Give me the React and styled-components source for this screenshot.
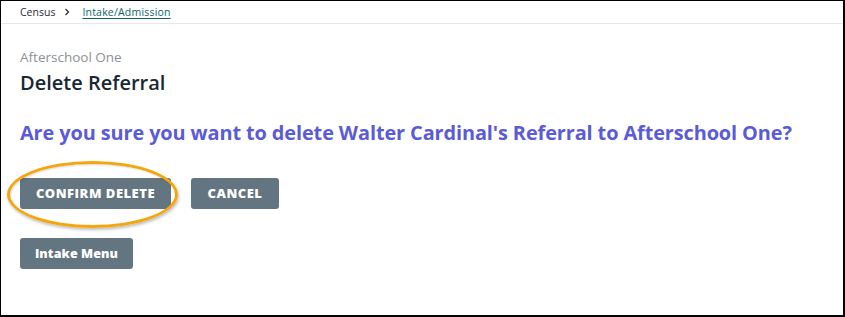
import React from "react";
import styled, { createGlobalStyle } from "styled-components";

const Global = createGlobalStyle`
  html, body { margin: 0; padding: 0; background: #fff; }
  body { font-family: "Open Sans", "Liberation Sans", sans-serif; }
  * { box-sizing: border-box; }
`;

const Frame = styled.div`
  width: 845px;
  height: 317px;
  border-left: 1px solid #000;
  border-top: 1px solid #000;
  border-right: 2px solid #000;
  border-bottom: 2px solid #000;
  background: #fff;
  overflow: hidden;
`;

const Breadcrumbs = styled.nav`
  height: 23px;
  display: flex;
  align-items: center;
  gap: 8px;
  padding: 0 0 1px 19px;
  border-bottom: 1px solid #e8e8e8;
  font-size: 10.5px;
  color: #1f2d36;
`;

const Crumb = styled.span`
  color: #1f2d36;
`;

const CrumbLink = styled.a`
  color: #11646c;
  text-decoration: underline;
  text-underline-offset: 2px;
  margin-left: 3px;
  letter-spacing: 0.2px;
`;

const Chevron = styled.svg`
  width: 8px;
  height: 8px;
`;

const Content = styled.main`
  padding: 25px 19px 0;
  display: flex;
  flex-direction: column;
`;

const Subtitle = styled.div`
  font-size: 13.5px;
  color: #8b9196;
  line-height: 16px;
`;

const Title = styled.h1`
  margin: 6px 0 0;
  font-size: 20px;
  font-weight: 600;
  color: #182733;
  line-height: 24px;
`;

const Question = styled.h2`
  margin: 26px 0 0;
  font-size: 19.9px;
  font-weight: 700;
  color: #5b5bd6;
  line-height: 24px;
  letter-spacing: -0.1px;
`;

const ButtonRow = styled.div`
  display: flex;
  gap: 20px;
  margin-top: 33px;
`;

const Highlight = styled.div`
  position: relative;
  display: inline-flex;
`;

const Ring = styled.span`
  position: absolute;
  left: -13px;
  top: -17px;
  width: 171px;
  height: 67px;
  border: 3px solid #f3a60d;
  border-radius: 50%;
  box-shadow: 1px 2px 3px rgba(0, 0, 0, 0.25), inset 1px 1px 2px rgba(0, 0, 0, 0.15);
  pointer-events: none;
`;

const Button = styled.button`
  height: 31px;
  width: ${(p) => p.$w}px;
  padding: 0 0 1px;
  border: none;
  border-radius: 3px;
  background: #627580;
  color: #fff;
  font-family: inherit;
  font-weight: 800;
  font-size: ${(p) => (p.$upper ? 13 : 12.5)}px;
  text-transform: ${(p) => (p.$upper ? "uppercase" : "none")};
  letter-spacing: ${(p) => (p.$upper ? 0.5 : 0.1)}px;
  cursor: pointer;
`;

const MenuRow = styled.div`
  margin-top: 29px;
  display: flex;
`;

export default function App() {
  return (
    <>
      <Global />
      <Frame>
        <Breadcrumbs>
          <Crumb>Census</Crumb>
          <Chevron viewBox="0 0 8 8">
            <path d="M2.5 1 L5.5 4 L2.5 7" fill="none" stroke="#1f2d36" strokeWidth="1.2" />
          </Chevron>
          <CrumbLink href="#">Intake/Admission</CrumbLink>
        </Breadcrumbs>
        <Content>
          <Subtitle>Afterschool One</Subtitle>
          <Title>Delete Referral</Title>
          <Question>
            Are you sure you want to delete Walter Cardinal's Referral to Afterschool One?
          </Question>
          <ButtonRow>
            <Highlight>
              <Ring />
              <Button $upper $w={151}>Confirm Delete</Button>
            </Highlight>
            <Button $upper $w={88}>Cancel</Button>
          </ButtonRow>
          <MenuRow>
            <Button $w={113}>Intake Menu</Button>
          </MenuRow>
        </Content>
      </Frame>
    </>
  );
}
